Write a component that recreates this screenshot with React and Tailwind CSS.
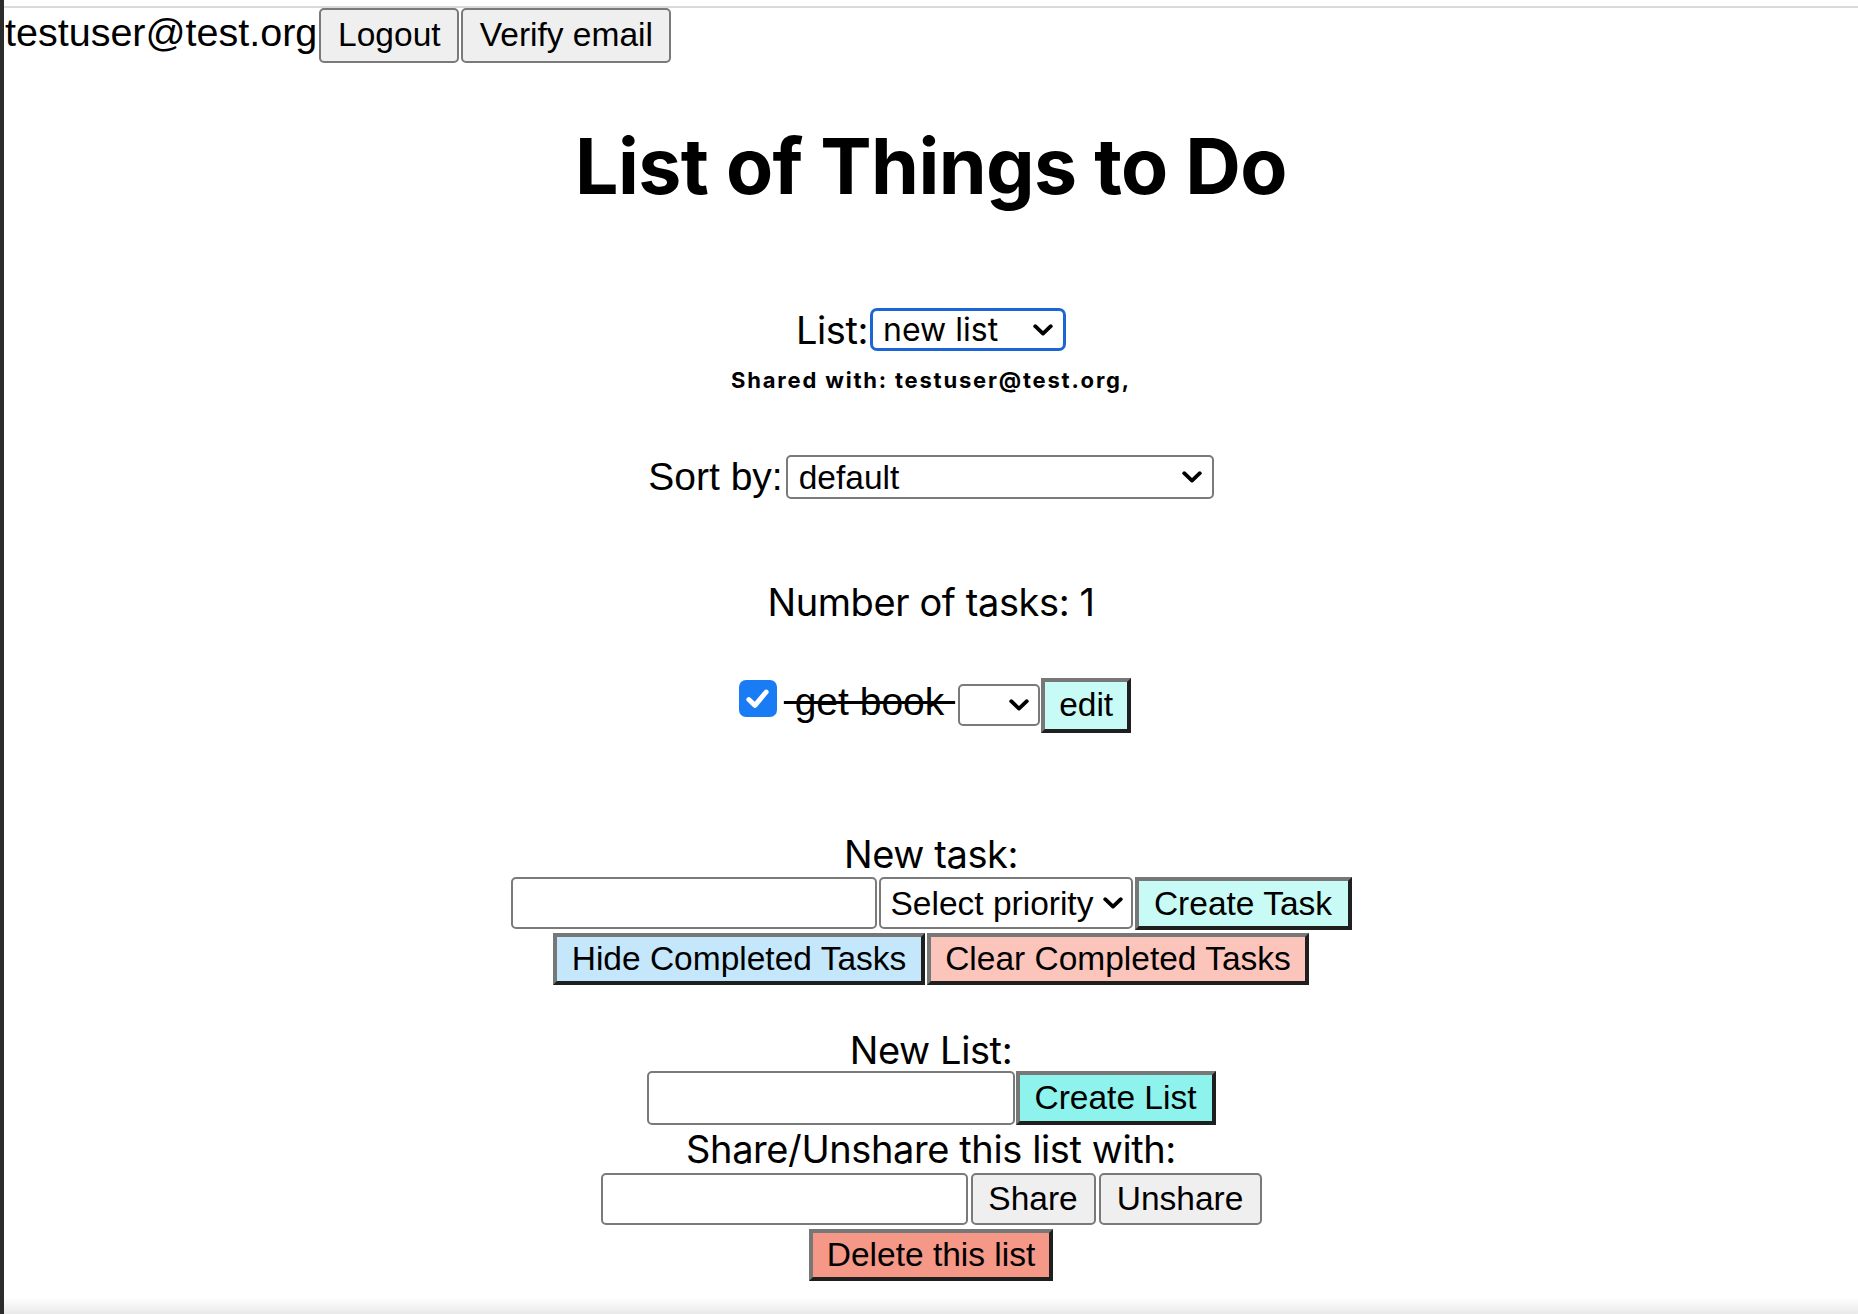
import React from 'react';

const sf = { fontFamily: 'Inter, "Noto Sans", sans-serif' };
const arial = { fontFamily: '"Liberation Sans", Arial, sans-serif' };

const Chevron = ({ className }) => (
    <svg viewBox="0 0 20 12" className={className} fill="none">
        <path d="M2.2 2.2 L10 9.6 L17.8 2.2" stroke="#000" strokeWidth="3.8" strokeLinecap="round" strokeLinejoin="round" />
    </svg>
);

const GrayButton = ({ children, className = '' }) => (
    <button
        style={arial}
        className={`flex items-center justify-center bg-[#efefef] border-2 border-[#7a7a7a] rounded-[5px] text-[33.5px] leading-none text-black ${className}`}
    >
        {children}
    </button>
);

const ColorButton = ({ children, className = '' }) => (
    <button
        style={arial}
        className={`flex items-center justify-center border-[4px] border-t-[#777] border-l-[#777] border-b-[#1f1f1f] border-r-[#1f1f1f] text-[33.5px] leading-none text-black ${className}`}
    >
        {children}
    </button>
);

const Select = ({ value, className = '', chevron = 'right-[10px]', textClass = '' }) => (
    <div className={`relative flex items-center bg-white ${className}`}>
        <span className={`leading-none text-black ${textClass}`}>{value}</span>
        <Chevron className={`absolute ${chevron} top-1/2 -translate-y-1/2 w-[20px] h-[12px]`} />
    </div>
);

const TextInput = ({ className = '' }) => (
    <input
        type="text"
        className={`bg-white border-2 border-[#7a7a7a] rounded-[5px] outline-none ${className}`}
    />
);

const Label = ({ children, className = '' }) => (
    <div style={sf} className={`text-[38px] tracking-[-0.4px] text-black text-center ${className}`}>
        {children}
    </div>
);

export default function App() {
    return (
        <div className="flex h-[1314px] w-full overflow-hidden bg-white">
            {/* edge of the window behind */}
            <div className="w-[4px] shrink-0 bg-[#2c2c2c]" />

            <div className="flex-1 flex flex-col">
                <div className="h-[6px]" />
                <div className="h-[2px] bg-[#dadada]" />

                {/* Account bar */}
                <div className="flex items-start h-[55px]">
                    <span style={arial} className="text-[39.5px] leading-none text-black mt-[5px] pl-[1px]">
                        testuser@test.org
                    </span>
                    <GrayButton className="w-[140px] h-[55px] ml-[2px] pb-[2px]">Logout</GrayButton>
                    <GrayButton className="w-[210px] h-[55px] ml-[2px] pb-[2px]">Verify email</GrayButton>
                </div>

                <main className="flex flex-col items-center">
                    <h1
                        style={sf}
                        className="text-[77px] leading-[77px] font-bold tracking-[-0.6px] text-black mt-[65px]"
                    >
                        List of Things to Do
                    </h1>

                    {/* List picker */}
                    <div className="flex items-center h-[43px] mt-[103px]">
                        <Label className="leading-[46px] mr-[2px]">List:</Label>
                        <Select
                            value={<span style={sf}>new list</span>}
                            className="w-[196px] h-[43px] border-[3px] border-[#1b66d4] rounded-[7px] pl-[10px]"
                            chevron="right-[10px]"
                            textClass="text-[32px]"
                        />
                    </div>
                    <div style={sf} className="text-[22px] leading-[28px] font-bold tracking-[1.8px] text-black mt-[15px]">
                        Shared with: testuser@test.org,
                    </div>

                    {/* Sorting */}
                    <div className="flex items-center h-[44px] mt-[61px]">
                        <span style={arial} className="text-[39px] leading-[44px] text-black mr-[3px]">Sort by:</span>
                        <Select
                            value={<span style={arial}>default</span>}
                            className="w-[428px] h-[44px] border-2 border-[#7a7a7a] rounded-[5px] pl-[11px]"
                            chevron="right-[10px]"
                            textClass="text-[33.5px]"
                        />
                    </div>

                    <Label className="leading-[46px] mt-[80px]">Number of tasks: 1</Label>

                    {/* Task list */}
                    <div className="flex items-start h-[55px] mt-[53px] ml-[8px]">
                        <div className="w-[38px] h-[37px] mt-[2px] rounded-[7px] bg-[#1a7cf5] flex items-center justify-center">
                            <svg viewBox="0 0 16 16" className="w-[29px] h-[29px]" fill="none">
                                <path d="M3.2 8.6 L6.6 11.8 L12.8 4.4" stroke="#fff" strokeWidth="2.7" strokeLinecap="round" strokeLinejoin="round" />
                            </svg>
                        </div>
                        <span style={arial} className="text-[39px] leading-[44px] text-black line-through ml-[7px] mt-[2px]">
                            {'\u00a0get book\u00a0'}
                        </span>
                        <Select
                            value=""
                            className="w-[82px] h-[42px] mt-[6px] ml-[3px] border-2 border-[#7a7a7a] rounded-[5px]"
                            chevron="right-[9px]"
                        />
                        <ColorButton className="w-[90px] h-[55px] ml-[1px] bg-[#c8fbf5] pb-[2px]">edit</ColorButton>
                    </div>

                    {/* New task */}
                    <Label className="leading-[46px] mt-[98px]">New task:</Label>
                    <div className="flex items-start h-[53px]">
                        <TextInput className="w-[366px] h-[52px]" />
                        <Select
                            value={<span style={arial}>Select priority</span>}
                            className="w-[254px] h-[52px] ml-[2px] border-2 border-[#7a7a7a] rounded-[5px] pl-[10px]"
                            chevron="right-[8px]"
                            textClass="text-[33.5px]"
                        />
                        <ColorButton className="w-[217px] h-[53px] ml-[2px] bg-[#c8fbf5]">Create Task</ColorButton>
                    </div>
                    <div className="flex h-[52px] mt-[3px]">
                        <ColorButton className="w-[372px] h-[52px] bg-[#c5e7fb]">Hide Completed Tasks</ColorButton>
                        <ColorButton className="w-[382px] h-[52px] ml-[2px] bg-[#fbc5bb]">Clear Completed Tasks</ColorButton>
                    </div>

                    {/* New list */}
                    <Label className="leading-[42px] mt-[44px]">New List:</Label>
                    <div className="flex h-[54px]">
                        <TextInput className="w-[368px] h-[54px]" />
                        <ColorButton className="w-[200px] h-[54px] ml-[1px] bg-[#8ef3ed]">Create List</ColorButton>
                    </div>

                    <Label className="leading-[48px]">Share/Unshare this list with:</Label>
                    <div className="flex h-[52px]">
                        <TextInput className="w-[367px] h-[52px]" />
                        <GrayButton className="w-[125px] h-[52px] ml-[3px]">Share</GrayButton>
                        <GrayButton className="w-[163px] h-[52px] ml-[3px]">Unshare</GrayButton>
                    </div>

                    <ColorButton className="w-[244px] h-[52px] mt-[4px] bg-[#f59888]">Delete this list</ColorButton>
                </main>

                <div className="flex-1 bg-gradient-to-b from-white via-white to-[#e9e9e9]" />
            </div>
        </div>
    );
}
